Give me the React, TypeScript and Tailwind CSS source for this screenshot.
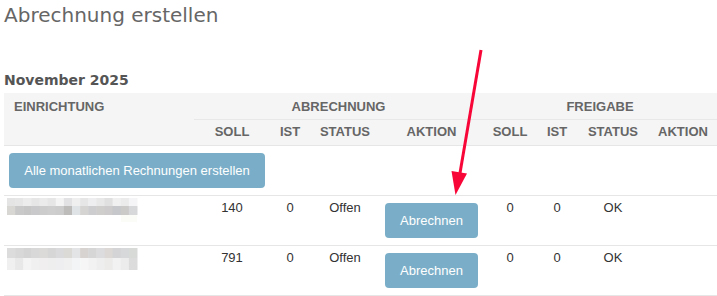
import React from "react";

const cols = "grid grid-cols-[190px_76px_40px_70px_103px_54px_40px_72px_68px]";

const blur1Top = ["#e4e4e4","#e6e6e6","#ececec","#e6e6e6","#ebebeb","#e6e6e6","#f4f4f4","#e2e2e4","#efefef","#e6e6e6","#eeeef0","#e8e8e8","#e0e0e0","#f0f0f0","#ebebeb","#f5f5f7"];
const blur1Bot = ["#d8d7d4","#c9c9c9","#c6c6c6","#c9c9cb","#cccccc","#cececf","#cdcccc","#bdbcbb","#e0e3e6","#d5d4d2","#cdcdcf","#d0cdcd","#cdcbcb","#c5c7ca","#cccac9","#d7d8da"];
const blur2Top = ["#dcdcdc","#d8d8d8","#d4d4d4","#d8d8d8","#dcdad8","#d6d6d6","#dadadc","#dcdad6","#e2e4e6","#d6d3d1","#d6d6d6","#dcdcde","#dcd8d6","#d4d4d6","#d6d8da","#d8dad8"];
const blur2Bot = ["#f0f0f0","#e8e8e8","#f4f4f4","#f0f0f0","#f0eeee","#eeeeee","#eeeef0","#f0f0f0","#f2f4f6","#f6f6f6","#f2f2f2","#eeeeee","#ecebea","#f2f2f2","#ececec","#dcdcdc"];

function Blur({ top, bot, h1, h2, tail }: { top: string[]; bot: string[]; h1: number; h2: number; tail?: boolean }) {
  const w = 130 / 16;
  return (
    <svg width="131" height={h1 + h2 + (tail ? 7 : 0)} className="block">
      {top.map((c, i) => (
        <rect key={"t" + i} x={i * w} y={0} width={w + 0.5} height={h1} fill={c} />
      ))}
      {bot.map((c, i) => (
        <rect key={"b" + i} x={i * w} y={h1} width={w + 0.5} height={h2} fill={c} />
      ))}
      {tail && <rect x={114} y={h1 + h2} width={16} height={7} fill="#fbfbf8" />}
    </svg>
  );
}

function Row({ soll, blur }: { soll: string; blur: React.ReactNode }) {
  const cell = "pt-[3px] text-center leading-[18px]";
  return (
    <div className={`${cols} h-[50px] border-b border-[#e6e6e6] text-[13px] text-[#333]`}>
      <div className="pl-[3px] pt-[2px]">{blur}</div>
      <div className={cell}>{soll}</div>
      <div className={cell}>0</div>
      <div className={cell}>Offen</div>
      <div className="flex justify-center pt-[7px]">
        <button className="h-[35px] w-[93px] rounded-[4px] bg-[#7aaec8] text-[13px] leading-[18px] text-white">
          Abrechnen
        </button>
      </div>
      <div className={cell}>0</div>
      <div className={cell}>0</div>
      <div className={cell}>OK</div>
      <div className={cell}></div>
    </div>
  );
}

export default function App() {
  const sub = "h-[25px] pt-[3px] text-center leading-[18px]";
  return (
    <div className="relative h-[296px] w-[717px] overflow-hidden bg-white font-['Liberation_Sans',Arial,sans-serif]">
      <h1 className="mt-[3px] pl-[4px] font-['DejaVu_Sans',sans-serif] text-[20px] leading-[24px] font-normal text-[#666]">
        Abrechnung erstellen
      </h1>
      <h2 className="mt-[43px] pl-[4px] font-['DejaVu_Sans',sans-serif] text-[14px] leading-[20px] font-bold text-[#555]">
        November 2025
      </h2>
      <div className="mt-[3px] ml-[4px] w-[713px]">
        <div className={`${cols} grid-rows-[27px_25px] border-b border-[#e6e6e6] bg-[#f5f5f5] text-[13px] font-bold leading-[18px] text-[#666]`}>
          <div className="row-span-2 pl-[10px] pt-[5px]">EINRICHTUNG</div>
          <div className="col-span-4 border-b border-[#e8e8e8] pt-[5px] text-center">ABRECHNUNG</div>
          <div className="col-span-4 border-b border-[#e8e8e8] pt-[5px] text-center">FREIGABE</div>
          <div className={sub}>SOLL</div>
          <div className={sub}>IST</div>
          <div className={sub}>STATUS</div>
          <div className={sub}>AKTION</div>
          <div className={sub}>SOLL</div>
          <div className={sub}>IST</div>
          <div className={sub}>STATUS</div>
          <div className={sub}>AKTION</div>
        </div>
        <div className="h-[50px] border-b border-[#e6e6e6] pl-[5px] pt-[7px]">
          <button className="h-[35px] w-[256px] rounded-[4px] bg-[#7aaec8] text-[13px] leading-[18px] text-white">
            Alle monatlichen Rechnungen erstellen
          </button>
        </div>
        <Row soll="140" blur={<Blur top={blur1Top} bot={blur1Bot} h1={8} h2={9} tail />} />
        <Row soll="791" blur={<Blur top={blur2Top} bot={blur2Bot} h1={10} h2={12} />} />
      </div>
      <svg className="pointer-events-none absolute left-0 top-0" width="717" height="296">
        <line x1="481" y1="50" x2="460" y2="173" stroke="#f80638" strokeWidth="3" />
        <polygon points="451.5,171 467,173.5 455.5,195" fill="#f80638" />
      </svg>
    </div>
  );
}
